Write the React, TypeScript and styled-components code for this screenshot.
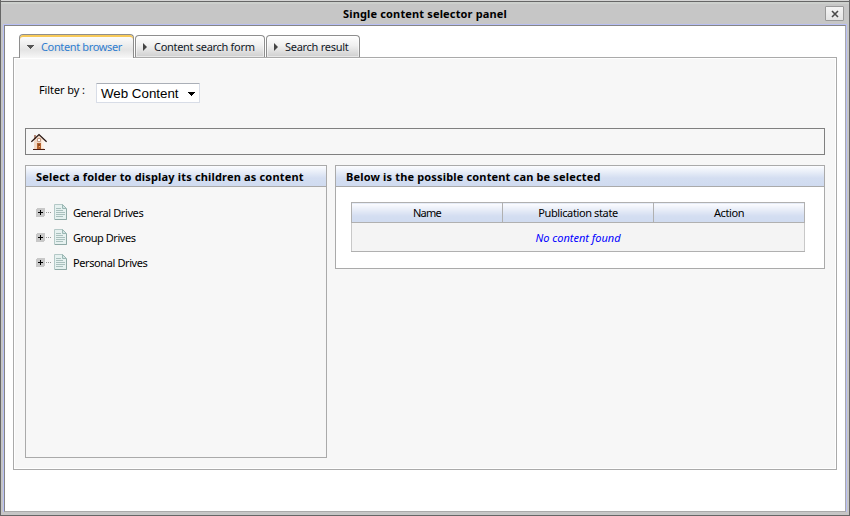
import React from 'react';
import styled, { createGlobalStyle } from 'styled-components';

const Global = createGlobalStyle`
  *, *::before, *::after { box-sizing: border-box; }
  html, body { margin: 0; padding: 0; overflow: hidden; }
  body { font: 11px/14px Tahoma, "Noto Sans", sans-serif; color: #000; background: #fff; }
`;

const Dialog = styled.div`
  width: 850px;
  height: 516px;
  display: flex;
  flex-direction: column;
  border: 1px solid #666;
  border-top: 0;
  background: #c6c6c6;
`;
const TitleBar = styled.header`
  height: 24px;
  flex: none;
  display: grid;
  grid-template-columns: 24px 1fr 24px;
  align-items: center;
  padding-top: 2px;
  border-top: 1px solid #d4d4d4;
  box-shadow: inset 0 1px #666, inset 0 3px #cdd0cd;
`;
const Label = styled.span<{ $track?: number; $bold?: boolean }>`
  white-space: nowrap;
  letter-spacing: ${p => p.$track ?? 0}px;
  font-weight: ${p => (p.$bold ? 700 : 400)};
`;
const Title = styled(Label)`
  grid-column: 2;
  justify-self: center;
`;
const CloseButton = styled.button`
  width: 19px;
  height: 15px;
  padding: 0;
  display: grid;
  place-items: center;
  border: 1px solid #999;
  border-radius: 1px;
  background: linear-gradient(#f4f4f4, #e4e4e4);
`;
const Frame = styled.div`
  flex: 1;
  display: flex;
  margin: 0 2px 3px;
  border: 1px solid #b8bff5;
  border-bottom: 0;
`;
const Body = styled.main`
  flex: 1;
  display: flex;
  flex-direction: column;
  padding: 8px 8px 41px;
  border: 1px solid #aaa;
  border-top-color: #858585;
  border-left-color: #858585;
  background: #fff;
`;
const TabBar = styled.nav`
  height: 24px;
  flex: none;
  display: flex;
  align-items: flex-end;
  gap: 1px;
  padding-left: 6px;
  margin-bottom: -1px;
  z-index: 1;
`;
const Tab = styled.div<{ $width: number; $active?: boolean }>`
  width: ${p => p.$width}px;
  height: ${p => (p.$active ? 24 : 22)}px;
  margin-bottom: ${p => (p.$active ? 0 : 1)}px;
  display: flex;
  align-items: center;
  gap: ${p => (p.$active ? 7 : 4)}px;
  padding: ${p => (p.$active ? '0 0 0 7px' : '1px 0 0 6px')};
  border: 1px solid #8e8e8e;
  border-bottom: 0;
  border-radius: 4px 4px 0 0;
  color: ${p => (p.$active ? '#2f7ed0' : '#111827')};
  background: ${p => (p.$active ? 'linear-gradient(#fff, #e4e4e4 65%, #f7f7f7)' : 'linear-gradient(#fff, #f0f0f0 45%, #cfcfcf)')};
  box-shadow: ${p => (p.$active ? 'inset 0 2px #f8ca59' : 'inset 0 0 0 1px #ffffff80')};
`;
const Content = styled.section`
  flex: 1;
  display: flex;
  flex-direction: column;
  padding: 25px 11px 11px;
  border: 1px solid #aaa;
  background: #f7f7f7;
  box-shadow: inset 0 0 0 1px #fff;
`;
const Filter = styled.div`
  height: 20px;
  flex: none;
  display: flex;
  align-items: flex-start;
  justify-content: space-between;
  width: 175px;
  padding-left: 14px;
`;
const Select = styled.div`
  width: 104px;
  height: 20px;
  display: flex;
  align-items: center;
  justify-content: space-between;
  padding: 1px 4px 0;
  border: 1px solid #d8dde7;
  border-top-color: #aaafb7;
  border-radius: 1px;
  background: #fff;
  font: 13.33px/16px "Liberation Sans", sans-serif;
`;
const Breadcrumb = styled.div`
  height: 27px;
  flex: none;
  margin-top: 25px;
  padding: 4px 5px;
  border: 1px solid #808080;
`;
const Columns = styled.div`
  flex: 1;
  display: grid;
  grid-template-columns: 302px 490px;
  gap: 8px;
  margin-top: 10px;
`;
const Panel = styled.section<{ $white?: boolean }>`
  align-self: ${p => (p.$white ? 'start' : 'stretch')};
  border: 1px solid #aaa;
  background: ${p => (p.$white ? '#fff' : '#f7f7f7')};
`;
const PanelHead = styled.h2`
  height: 21px;
  margin: 0;
  padding: 4px 10px 0;
  font: inherit;
  border-bottom: 1px solid #aaa;
  background: linear-gradient(#fcfdff, #d4def1 60%, #d0dbf0);
`;
const Tree = styled.ul`
  list-style: none;
  margin: 0;
  padding: 13px 0 0 10px;
`;
const Node = styled.li`
  height: 25px;
  display: flex;
  align-items: center;
`;
const PageSlot = styled.span`
  display: flex;
  margin-top: -1px;
`;
const NodeText = styled(Label)`
  margin-left: 6px;
`;
const Table = styled.table`
  width: 454px;
  height: 50px;
  margin: 15px 15px 16px;
  table-layout: fixed;
  border-collapse: collapse;
  text-align: center;
`;
const Th = styled.th`
  height: 20px;
  padding: 1px 0 0;
  font-weight: 400;
  border: 1px solid #b0b0b0;
  background: linear-gradient(#fcfdff, #d4def1 65%, #d0dbf0);
`;
const Td = styled.td`
  padding: 2px 0 0;
  border: 1px solid #c8c8c8;
  border-bottom-color: #b0b0b0;
  background: #f4f4f4;
  color: #00f;
  font-style: italic;
`;

const Down = ({ fill = '#000' }: { fill?: string }) => (
  <svg width="7" height="4" shapeRendering="crispEdges"><path d="M0 0h7v1H6v1H5v1H4v1H3V3H2V2H1V1H0z" fill={fill} /></svg>
);
const Right = () => (
  <svg width="8" height="9"><path d="M1 0v8l4-4z" fill="#444" /></svg>
);
const Cross = () => (
  <svg width="8" height="8"><path d="M1 1l6 6M7 1L1 7" stroke="#4a4a4a" strokeWidth="1.6" /></svg>
);
const House = () => (
  <svg width="17" height="18" style={{ display: 'block' }}>
    <path d="M3 7.5L8 2.5l5 5V16H3z" fill="#f3d9c6" />
    <path d="M10.5 7h2.5v8h-2.5z" fill="#fff1e6" />
    <path d="M3 2h2v3.5L3 7z" fill="#b58a78" />
    <path d="M.4 8.8L8 1.6l7.6 7.2" fill="none" stroke="#28140f" strokeWidth="1.25" />
    <path d="M6.5 5.5h3v3h-3z" fill="#fff" stroke="#c39c88" />
    <path d="M6 10h4v6H6z" fill="#b8652f" />
    <path d="M7 11h2v2H7z" fill="#8c4a22" />
    <path d="M8 13h1v1H8z" fill="#f0b080" />
    <path d="M2 16h12v1H2z" fill="#4b1d12" />
  </svg>
);
const Expander = () => (
  <svg width="18" height="9" shapeRendering="crispEdges">
    <rect width="9" height="9" rx="2" fill="#c8c8c8" />
    <path d="M2 4h5v1H2zM4 2h1v5H4z" fill="#000" />
    <path d="M10 4h1v1h-1zM12 4h1v1h-1zM14 4h1v1h-1z" fill="#999" />
  </svg>
);
const Page = () => (
  <svg width="13" height="16">
    <path d="M.5.5h8l4 4v11H.5z" fill="#e6f1f0" stroke="#b4c9c7" />
    <path d="M8.5.5v4h4z" fill="#d3e4e3" stroke="#9bb8b4" />
    <path d="M12.5 5v10.5H1" fill="none" stroke="#8fa9a6" />
    <path d="M2 4.5h5M2 6.5h7M2 8.5h9M2 10.5h9M2 12.5h7" stroke="#a9c0bd" />
  </svg>
);

const drives = [
  { name: 'General Drives', track: -0.4 },
  { name: 'Group Drives', track: -0.45 },
  { name: 'Personal Drives', track: -0.4 },
];

export default function App() {
  return (
    <>
      <Global />
      <Dialog>
        <TitleBar>
          <Title $bold $track={0.15}>Single content selector panel</Title>
          <CloseButton aria-label="Close"><Cross /></CloseButton>
        </TitleBar>
        <Frame>
          <Body>
            <TabBar>
              <Tab $width={115} $active><Down fill="#555" /><Label $track={-0.36}>Content browser</Label></Tab>
              <Tab $width={130}><Right /><Label $track={-0.3}>Content search form</Label></Tab>
              <Tab $width={94}><Right /><Label $track={-0.28}>Search result</Label></Tab>
            </TabBar>
            <Content>
              <Filter><Label $track={-0.1}>Filter by :</Label><Select>Web Content <Down /></Select></Filter>
              <Breadcrumb><House /></Breadcrumb>
              <Columns>
                <Panel>
                  <PanelHead><Label $bold $track={0.17}>Select a folder to display its children as content</Label></PanelHead>
                  <Tree>
                    {drives.map(d => (
                      <Node key={d.name}><Expander /><PageSlot><Page /></PageSlot><NodeText $track={d.track}>{d.name}</NodeText></Node>
                    ))}
                  </Tree>
                </Panel>
                <Panel $white>
                  <PanelHead><Label $bold $track={0.16}>Below is the possible content can be selected</Label></PanelHead>
                  <Table>
                    <thead><tr><Th><Label $track={-0.7}>Name</Label></Th><Th><Label $track={-0.38}>Publication state</Label></Th><Th><Label $track={-0.4}>Action</Label></Th></tr></thead>
                    <tbody><tr><Td colSpan={3}><Label>No content found</Label></Td></tr></tbody>
                  </Table>
                </Panel>
              </Columns>
            </Content>
          </Body>
        </Frame>
      </Dialog>
    </>
  );
}
